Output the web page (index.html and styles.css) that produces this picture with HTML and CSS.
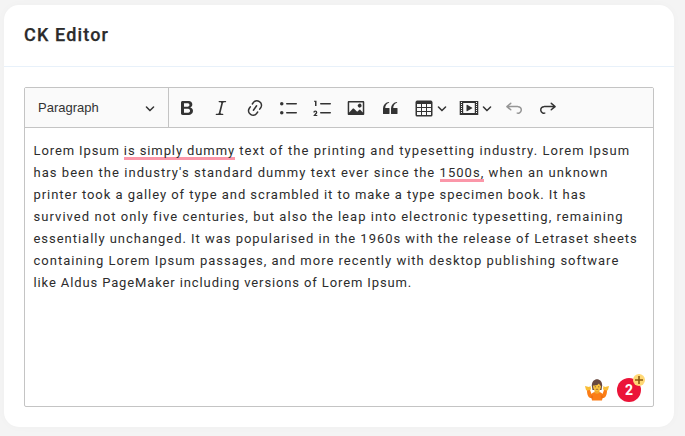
FILE: index.html
```html
<!DOCTYPE html>
<html lang="en">
<head>
<meta charset="utf-8">
<title>CK Editor</title>
<link rel="stylesheet" href="styles.css">
</head>
<body>
<section class="card">
  <header class="card-header"><h1>CK Editor</h1></header>
  <div class="card-body">
    <div class="editor">
      <div class="toolbar">
        <div class="heading-select"><span>Paragraph</span>
          <svg class="chevron" viewBox="0 0 10 10"><path d="M.941 4.523a.75.75 0 1 1 1.06-1.06l3.006 3.005 3.005-3.005a.75.75 0 1 1 1.06 1.06l-3.549 3.55a.75.75 0 0 1-1.168-.136L.941 4.523z"/></svg>
        </div>
        <div class="tools">
          <svg class="icon" viewBox="0 0 20 20"><path d="M10.187 17H5.773c-.637 0-1.092-.138-1.364-.415-.273-.277-.409-.718-.409-1.323V4.738c0-.617.14-1.062.419-1.332.279-.27.73-.406 1.354-.406h4.68c.69 0 1.288.041 1.793.124.506.083.96.242 1.36.478.341.197.644.447.906.75a3.262 3.262 0 0 1 .808 2.162c0 1.401-.722 2.426-2.167 3.075C15.05 10.175 16 11.315 16 13.01a3.756 3.756 0 0 1-2.296 3.504 6.1 6.1 0 0 1-1.517.377c-.571.073-1.238.11-2 .11zm-.217-6.217H7v4.087h3.069c1.977 0 2.965-.69 2.965-2.072 0-.707-.256-1.22-.768-1.537-.512-.319-1.277-.478-2.296-.478zM7 5.13v3.619h2.606c.729 0 1.292-.067 1.69-.2a1.6 1.6 0 0 0 .91-.765c.165-.267.247-.566.247-.897 0-.707-.26-1.176-.778-1.409-.519-.232-1.31-.348-2.375-.348H7z"/></svg>
          <svg class="icon" viewBox="0 0 20 20"><path d="m9.586 14.633.021.004c-.036.335.095.655.393.962.082.083.173.15.274.201h1.474a.6.6 0 1 1 0 1.2H5.304a.6.6 0 0 1 0-1.2h1.15c.474-.07.809-.182 1.005-.334.157-.122.291-.32.404-.597l2.416-9.55a1.053 1.053 0 0 0-.281-.823 1.12 1.12 0 0 0-.442-.296H8.15a.6.6 0 0 1 0-1.2h6.443a.6.6 0 1 1 0 1.2h-1.195c-.376.056-.65.155-.823.296-.215.175-.423.439-.623.79l-2.366 9.347z"/></svg>
          <svg class="icon" viewBox="0 0 20 20"><path d="m11.077 15 .991-1.416a.75.75 0 1 1 1.229.86l-1.148 1.64a.748.748 0 0 1-.217.206 5.251 5.251 0 0 1-8.503-5.955.741.741 0 0 1 .12-.274l1.147-1.639a.75.75 0 1 1 1.228.86L4.933 10.7l.006.003a3.75 3.75 0 0 0 6.132 4.294l.006.004zm5.494-5.335a.748.748 0 0 1-.12.274l-1.147 1.639a.75.75 0 1 1-1.228-.86l.86-1.23a3.75 3.75 0 0 0-6.144-4.301l-.86 1.229a.75.75 0 0 1-1.229-.86l1.148-1.64a.748.748 0 0 1 .217-.206 5.251 5.251 0 0 1 8.503 5.955zm-4.563-2.532a.75.75 0 0 1 .184 1.045l-3.155 4.505a.75.75 0 1 1-1.229-.86l3.155-4.506a.75.75 0 0 1 1.045-.184z"/></svg>
          <svg class="icon" viewBox="0 0 20 20"><rect x="7" y="5" width="11" height="1.5" rx=".75"/><rect x="7" y="14" width="11" height="1.5" rx=".75"/><circle cx="2.75" cy="5.75" r="1.75"/><circle cx="2.75" cy="14.75" r="1.75"/></svg>
          <svg class="icon" viewBox="0 0 20 20"><rect x="7" y="5" width="11" height="1.5" rx=".75"/><rect x="7" y="14" width="11" height="1.5" rx=".75"/><path d="M3.5 3v5H2V3.7H1v-1h2.5V3zM.343 17.857l2.59-3.257H2.92a.6.6 0 1 0-1.04 0H.302a2 2 0 1 1 3.995 0h-.001c-.048.405-.16.734-.333.988-.175.254-.59.692-1.244 1.312H4.3v1h-4l.043-.043z"/></svg>
          <svg class="icon" viewBox="0 0 20 20"><path d="M6.91 10.54c.26-.23.64-.21.88.03l3.36 3.14 2.23-2.06a.64.64 0 0 1 .87 0l2.52 2.97V4.5H3.2v10.12l3.71-4.08zm10.27-7.51c.6 0 1.09.47 1.09 1.05v11.84c0 .59-.49 1.06-1.09 1.06H2.79c-.6 0-1.09-.47-1.09-1.06V4.08c0-.58.49-1.05 1.1-1.05h14.38zm-5.22 5.56a1.96 1.96 0 1 1 3.4-1.96 1.96 1.96 0 0 1-3.4 1.96z"/></svg>
          <svg class="icon" viewBox="0 0 20 20"><path d="M3 10.423a6.5 6.5 0 0 1 6.056-6.408l.038.67C6.448 5.423 5.354 7.663 5.22 10H9c.552 0 .5.432.5.986v4.511c0 .554-.448.503-1 .503h-5c-.552 0-.5-.449-.5-1.003v-4.574zm8 0a6.5 6.5 0 0 1 6.056-6.408l.038.67c-2.646.739-3.74 2.979-3.873 5.315H17c.552 0 .5.432.5.986v4.511c0 .554-.448.503-1 .503h-5c-.552 0-.5-.449-.5-1.003v-4.574z"/></svg>
          <div class="split">
            <svg class="icon" viewBox="0 0 20 20"><path d="M3 6v3h4V6H3zm0 4v3h4v-3H3zm0 4v3h4v-3H3zm5 3h4v-3H8v3zm5 0h4v-3h-4v3zm4-4v-3h-4v3h4zm0-4V6h-4v3h4zm1.5 8a1.5 1.5 0 0 1-1.5 1.5H3A1.5 1.5 0 0 1 1.5 17V4c.222-.863 1.068-1.5 2-1.5h13c.932 0 1.778.637 2 1.5v13zM12 13v-3H8v3h4zm0-4V6H8v3h4z"/></svg>
            <svg class="chevron" viewBox="0 0 10 10"><path d="M.941 4.523a.75.75 0 1 1 1.06-1.06l3.006 3.005 3.005-3.005a.75.75 0 1 1 1.06 1.06l-3.549 3.55a.75.75 0 0 1-1.168-.136L.941 4.523z"/></svg>
          </div>
          <div class="split">
            <svg class="icon" viewBox="0 0 20 20"><path fill-rule="evenodd" d="M.7 3.03h18.57v13.95H.7zM4.2 5v10h11.57V5zM2 4v1h1V4zM2 6v1h1V6zM2 8v1h1V8zM2 10v1h1v-1zM2 12v1h1v-1zM2 14v1h1v-1zM17 4v1h1V4zM17 6v1h1V6zM17 8v1h1V8zM17 10v1h1v-1zM17 12v1h1v-1zM17 14v1h1v-1zM7.5 7.177a.4.4 0 0 1 .593-.351l5.133 2.824a.4.4 0 0 1 0 .7l-5.133 2.824a.4.4 0 0 1-.593-.35z"/></svg>
            <svg class="chevron" viewBox="0 0 10 10"><path d="M.941 4.523a.75.75 0 1 1 1.06-1.06l3.006 3.005 3.005-3.005a.75.75 0 1 1 1.06 1.06l-3.549 3.55a.75.75 0 0 1-1.168-.136L.941 4.523z"/></svg>
          </div>
          <svg class="icon disabled" viewBox="0 0 20 20"><path d="m5.042 9.367 2.189 1.837a.75.75 0 0 1-.965 1.149l-3.788-3.18a.747.747 0 0 1-.21-.284.75.75 0 0 1 .17-.945L6.23 4.762a.75.75 0 1 1 .964 1.15L4.863 7.866h8.917A.75.75 0 0 1 14 7.9a4 4 0 1 1-1.477 7.718l.344-1.489a2.5 2.5 0 1 0 1.094-4.73l.008-.032H5.042z"/></svg>
          <svg class="icon" viewBox="0 0 20 20"><path transform="matrix(-1 0 0 1 20 0)" d="m5.042 9.367 2.189 1.837a.75.75 0 0 1-.965 1.149l-3.788-3.18a.747.747 0 0 1-.21-.284.75.75 0 0 1 .17-.945L6.23 4.762a.75.75 0 1 1 .964 1.15L4.863 7.866h8.917A.75.75 0 0 1 14 7.9a4 4 0 1 1-1.477 7.718l.344-1.489a2.5 2.5 0 1 0 1.094-4.73l.008-.032H5.042z"/></svg>
        </div>
      </div>
      <div class="content">
        <p>
          <span class="line l1"><span class="lead">Lorem Ipsum <mark>is simply dummy</mark></span> text of the printing and typesetting industry. Lorem Ipsum</span>
          <span class="line l2">has been the industry's standard dummy text ever since the <mark>1500s,</mark> when an unknown</span>
          <span class="line l3">printer took a galley of type and scrambled it to make a type specimen book. It has</span>
          <span class="line l4">survived not only five centuries, but also the leap into electronic typesetting, remaining</span>
          <span class="line l5">essentially unchanged. It was popularised in the 1960s with the release of Letraset sheets</span>
          <span class="line l6">containing Lorem Ipsum passages, and more recently with desktop publishing software</span>
          <span class="line l7">like Aldus PageMaker including versions of Lorem Ipsum.</span>
        </p>
        <div class="assist">
          <svg class="shrug" viewBox="0 0 24 24">
            <path d="M0 8l4 1 1.500-1 .5 3-2 3-3-2zM24 8l-4 1-1.500-1-.5 3 2 3 3-2z" fill="#f9bd35"/>
            <path d="M2 12.500l3-.5 1.500 4c2-3 9-3 11 0l1.500-4 3 .5c0 5-2 8-4.500 7.500l-.5 2.500H7L6.500 20C4 20.500 2 17.500 2 12.500z" fill="#fb7d16"/>
            <path d="M9.500 12h5v2.500q-2.500 2.500-5 0z" fill="#f4a72b"/>
            <path d="M6.800 7.500c0-8.500 10.400-8.500 10.400 0l-.7 4.500h-9z" fill="#68483f"/>
            <path d="M8 7.500q4.500.5 6-2 1 2 2 2.500c0 7-8 7-8-.5z" fill="#fcc33c"/>
            <path d="M9.700 8.800h1.300m2 0h1.300M10.800 11.300h2.400" stroke="#704332" stroke-width=".7"/>
            <path d="M7 17.500v3m10-3v3" stroke="#df5c13" stroke-width=".8"/>
          </svg>
          <div class="errors">2<span class="plus"><svg viewBox="0 0 12 12"><path d="M6 2v8M2 6h8" stroke="#8a5a10" stroke-width="1.6"/></svg></span></div>
        </div>
      </div>
    </div>
  </div>
</section>
</body>
</html>
```
FILE: styles.css
```css
* { box-sizing: border-box; }
body { margin: 0; padding: 5px 11px 9px 4px; height: 436px; background: #f4f4f4; font-family: Roboto, sans-serif; color: #2c2c2c; overflow: hidden; }
.card { height: 422px; background: #fff; border-radius: 15px; box-shadow: 0 0 10px rgba(0, 0, 0, .025); }
.card-header { height: 62px; padding: 0 20px 2px; display: flex; align-items: center; border-bottom: 1px solid #e8f1fa; }
h1 { margin: 0; font-size: 18px; font-weight: 500; letter-spacing: 1.15px; color: #2b2b2b; -webkit-text-stroke: .25px #2b2b2b; }
.card-body { padding: 20px; }
.editor { height: 320px; border: 1px solid #c4c4c4; border-radius: 2px; display: flex; flex-direction: column; }
.toolbar { flex: none; height: 40px; display: flex; background: #fafafa; border-bottom: 1px solid #c4c4c4; }
.heading-select { width: 144px; padding: 0 13px; display: flex; align-items: center; justify-content: space-between; border-right: 1px solid #c4c4c4; font: 13px "Liberation Sans", sans-serif; color: #333; }
.tools { display: flex; align-items: center; gap: 13.9px; padding-left: 8px; padding-top: 1px; }
.split { display: flex; align-items: center; gap: 3px; width: 31px; }
.icon { width: 20px; height: 20px; flex: none; fill: #333; }
.chevron { width: 10px; height: 10px; flex: none; fill: #333; }
.disabled { opacity: .5; }
.content { flex: 1; position: relative; padding: 12px 8.5px; }
p { margin: 0; font-size: 13px; line-height: 22px; }
.line { display: block; width: max-content; white-space: nowrap; letter-spacing: 1px; }
.l1 { letter-spacing: 1.05px; }
.lead { letter-spacing: .9px; }
.l2 { letter-spacing: 1.04px; }
.l3 { letter-spacing: .95px; }
.l4 { letter-spacing: 1.05px; }
.l5 { letter-spacing: .97px; }
.l7 { letter-spacing: .88px; }
mark { display: inline-block; height: 20px; margin-bottom: -1px; background: linear-gradient(#fb97a9, #fb97a9) 0 17px / 100% 3px no-repeat; color: inherit; }
.assist { position: absolute; right: 12px; bottom: 4px; display: flex; align-items: center; gap: 8px; }
.shrug { width: 24px; height: 24px; }
.errors { position: relative; width: 24px; height: 24px; border-radius: 50%; background: #eb1438; color: #fff; font: 700 14px/24px Roboto, sans-serif; text-align: center; }
.plus { position: absolute; left: 16px; top: -4px; width: 12px; height: 12px; border-radius: 50%; background: #ffd875; }
.plus svg { display: block; width: 12px; height: 12px; }
```
